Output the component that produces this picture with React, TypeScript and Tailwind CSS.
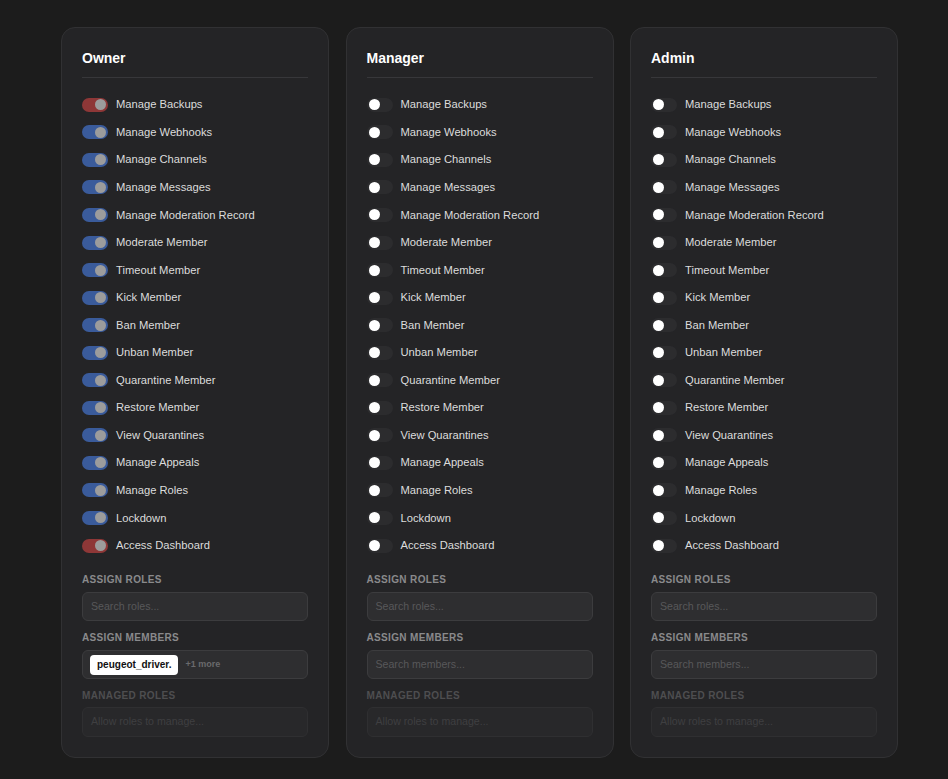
import React from "react";

const perms = [
  "Manage Backups",
  "Manage Webhooks",
  "Manage Channels",
  "Manage Messages",
  "Manage Moderation Record",
  "Moderate Member",
  "Timeout Member",
  "Kick Member",
  "Ban Member",
  "Unban Member",
  "Quarantine Member",
  "Restore Member",
  "View Quarantines",
  "Manage Appeals",
  "Manage Roles",
  "Lockdown",
  "Access Dashboard",
];

const red = new Set(["Manage Backups", "Access Dashboard"]);

function Toggle({ on, danger }: { on: boolean; danger: boolean }) {
  if (on) {
    return (
      <div
        className={
          "flex h-[14px] w-[26px] shrink-0 items-center justify-end rounded-full pr-[2px] " +
          (danger ? "bg-[#8e3737]" : "bg-[#3a5b9b]")
        }
      >
        <div className="h-[11px] w-[11px] rounded-full bg-[#9c9c9c]" />
      </div>
    );
  }
  return (
    <div className="flex h-[14px] w-[26px] shrink-0 items-center justify-start rounded-full bg-[#2c2c2e] pl-[2px]">
      <div className="h-[11px] w-[11px] rounded-full bg-white" />
    </div>
  );
}

function Card({ title, on }: { title: string; on: boolean }) {
  return (
    <div className="flex flex-col rounded-[14px] border border-[#313133] bg-[#242426] px-[20px] pt-[20px] pb-[20px]">
      <div className="border-b border-[#37373a] pb-[9px] text-[14px] font-bold leading-[20px] text-white">
        {title}
      </div>
      <div className="mt-[13px] flex flex-col">
        {perms.map((p) => (
          <div key={p} className="flex h-[27.56px] items-center gap-[8px]">
            <Toggle on={on} danger={red.has(p)} />
            <span className="text-[11.2px] text-[#dcdcdc]">{p}</span>
          </div>
        ))}
      </div>
      <div className="mt-[14px] text-[10px] font-bold uppercase leading-[14px] tracking-[0.35px] text-[#8a8a8c]">
        Assign Roles
      </div>
      <div className="mt-[5px] flex h-[29px] items-center rounded-[6px] border border-[#3c3c3e] bg-[#2e2e30] px-[8px] text-[10.6px] text-[#58585a]">
        Search roles...
      </div>
      <div className="mt-[10px] text-[10px] font-bold uppercase leading-[14px] tracking-[0.35px] text-[#8a8a8c]">
        Assign Members
      </div>
      <div className="mt-[5px] flex h-[29px] items-center gap-[7px] rounded-[6px] border border-[#3c3c3e] bg-[#2e2e30] px-[7px] text-[10.6px] text-[#58585a]">
        {on ? (
          <>
            <span className="flex h-[20px] items-center rounded-[4px] bg-white px-[7px] text-[10px] font-bold text-[#111]">
              peugeot_driver.
            </span>
            <span className="text-[9px] font-bold text-[#6a6a6c]">+1 more</span>
          </>
        ) : (
          <span className="pl-[1px]">Search members...</span>
        )}
      </div>
      <div className="mt-[10px] text-[10px] font-bold uppercase leading-[14px] tracking-[0.35px] text-[#4e4e50]">
        Managed Roles
      </div>
      <div className="mt-[4px] flex h-[30px] items-center rounded-[6px] border border-[#2f2f31] bg-[#28282a] px-[8px] text-[10.6px] text-[#3f3f41]">
        Allow roles to manage...
      </div>
    </div>
  );
}

export default function App() {
  return (
    <div
      className="min-h-[779px] w-full bg-[#1c1c1c] pt-[27px]"
      style={{ fontFamily: '"Liberation Sans", Arial, sans-serif' }}
    >
      <div className="ml-[61px] grid w-[837px] grid-cols-3 gap-[16.5px]">
        <Card title="Owner" on={true} />
        <Card title="Manager" on={false} />
        <Card title="Admin" on={false} />
      </div>
    </div>
  );
}
